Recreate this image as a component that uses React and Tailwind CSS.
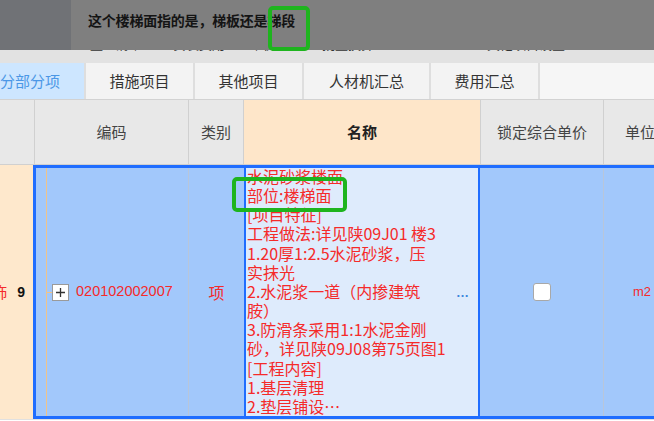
import React from "react";

const nameLines = [
  "水泥砂浆楼面",
  "部位:楼梯面",
  "[项目特征]",
  "工程做法:详见陕09J01  楼3",
  "1.20厚1:2.5水泥砂浆，压",
  "实抹光",
  "2.水泥浆一道（内掺建筑",
  "胺）",
  "3.防滑条采用1:1水泥金刚",
  "砂，详见陕09J08第75页图1",
  "[工程内容]",
  "1.基层清理",
  "2.垫层铺设…",
];

const tabs = [
  { label: "分部分项", w: "w-[84px]", active: true },
  { label: "措施项目", w: "w-[107px]" },
  { label: "其他项目", w: "w-[107px]" },
  { label: "人材机汇总", w: "w-[125px]" },
  { label: "费用汇总", w: "w-[107px]" },
];

export default function App() {
  return (
    <div className="relative w-[654px] h-[421px] overflow-hidden bg-white font-['Noto_Sans_CJK_SC','Noto_Sans',sans-serif]">
      {/* toolbar, mostly hidden under the question overlay */}
      <div className="relative h-[63px] bg-[#e2e2e2]">
        <div className="flex pt-[37px] text-[13px] leading-[13px] text-[#333] whitespace-nowrap">
          <span className="ml-[90px] w-[83px]">整理清单</span>
          <span className="w-[77px]">安装费用</span>
          <span className="w-[72px]">单价构成</span>
          <span className="w-[165px]">批量换算</span>
          <span>其他项目设置</span>
        </div>

        {/* question overlay */}
        <div className="absolute inset-x-0 top-0 h-[50px] flex">
          <div className="w-[71px] bg-[#707276]" />
          <div className="flex-1 bg-[#7f7f7f] flex items-center pl-[17px] pb-[10px]">
            <span className="text-[14px] font-bold text-[#141414] tracking-[-0.2px]">
              这个楼梯面指的是，梯板还是梯段
            </span>
          </div>
        </div>
      </div>

      {/* tabs */}
      <div className="flex h-[37px] gap-[2px] bg-[#dedede] border-b border-[#d2d2d2]">
        {tabs.map((t) => (
          <div
            key={t.label}
            className={`${t.w} shrink-0 flex items-center justify-center text-[15px] ${
              t.active ? "bg-[#cde6ff] text-[#4b97e6] justify-start" : "bg-[#f3f3f3] text-[#333]"
            }`}
          >
            {t.label}
          </div>
        ))}
        <div className="flex-1 bg-[#f6f6f6]" />
      </div>

      {/* header */}
      <div className="flex h-[65px] bg-[#e8e8e8] border-b border-[#d0d0d0] text-[15px] text-[#444]">
        <div className="w-[35px] shrink-0 border-r border-[#d0d0d0]" />
        <div className="w-[154px] shrink-0 border-r border-[#d0d0d0] flex items-center justify-center">
          编码
        </div>
        <div className="w-[55px] shrink-0 border-r border-[#d0d0d0] flex items-center justify-center">
          类别
        </div>
        <div className="w-[237px] shrink-0 border-r border-[#d0d0d0] bg-[#fee6c9] flex items-center justify-center font-bold text-[#222]">
          名称
        </div>
        <div className="w-[123px] shrink-0 border-r border-[#d0d0d0] flex items-center justify-center whitespace-nowrap">
          锁定综合单价
        </div>
        <div className="flex-1 flex items-center pl-[21px] whitespace-nowrap">单位</div>
      </div>

      {/* selected data row */}
      <div className="flex h-[255px] border-b border-[#e0e0e0]">
        <div className="w-[33px] shrink-0 bg-[#fee8cc] flex items-center justify-end pr-[8px] overflow-hidden whitespace-nowrap">
          <span className="text-[15px] text-[#f52a2a] mr-[10px]">楼梯装饰</span>
          <span className="text-[14px] font-bold text-[#111] font-['Liberation_Sans',sans-serif]">9</span>
        </div>

        <div className="flex-1 flex bg-[#a2c8fb] border-y-[3px] border-l-[3px] border-[#1f6dff] overflow-hidden">
          {/* 编码 */}
          <div className="relative w-[153px] shrink-0 border-r border-[#b8c6da] flex items-center">
            <div className="absolute left-[10px] inset-y-0 w-px bg-[#f0c48a]" />
            <div className="absolute left-[10px] top-1/2 w-[6px] h-px bg-[#f0c48a]" />
            <div className="ml-[16px] w-[17px] h-[17px] border border-[#9a9a9a] bg-white flex items-center justify-center">
              <svg width="11" height="11" viewBox="0 0 11 11">
                <path d="M1 5.5H10M5.5 1V10" stroke="#333" strokeWidth="1.3" />
              </svg>
            </div>
            <span className="ml-[7px] text-[14.5px] text-[#f52a2a] font-['Liberation_Sans',sans-serif]">
              020102002007
            </span>
          </div>

          {/* 类别 */}
          <div className="w-[55px] shrink-0 flex items-center justify-center text-[16px] text-[#f52a2a]">
            项
          </div>

          {/* 名称 */}
          <div className="relative w-[236px] shrink-0 border-x-2 border-[#1f6dff] bg-[#deebfc] overflow-hidden">
            <div className="-mt-[1px] pl-px text-[16px] leading-[19.15px] text-[#f52a2a] whitespace-nowrap">
              {nameLines.map((l, i) => (
                <div key={i}>{l}</div>
              ))}
            </div>
            <span className="absolute right-[9px] top-1/2 -translate-y-1/2 text-[13px] leading-none font-bold text-[#3f86dc] font-['Liberation_Sans',sans-serif]">
              …
            </span>
          </div>

          {/* 锁定综合单价 */}
          <div className="w-[124px] shrink-0 border-r border-[#b8c6da] flex items-center justify-center">
            <div className="w-[18px] h-[18px] rounded-[3px] border-[1.5px] border-[#a8a8a8] bg-white" />
          </div>

          {/* 单位 */}
          <div className="flex-1 flex items-center pl-[29px] text-[13px] text-[#f52a2a] font-['Liberation_Sans',sans-serif]">
            m2
          </div>
        </div>
      </div>

      {/* annotation boxes */}
      <div className="absolute left-[268px] top-[6px] w-[42px] h-[45px] border-4 border-[#1eb41e] rounded-[5px]" />
      <div className="absolute left-[232px] top-[177px] w-[115px] h-[35px] border-4 border-[#1eb41e] rounded-[5px]" />
    </div>
  );
}
